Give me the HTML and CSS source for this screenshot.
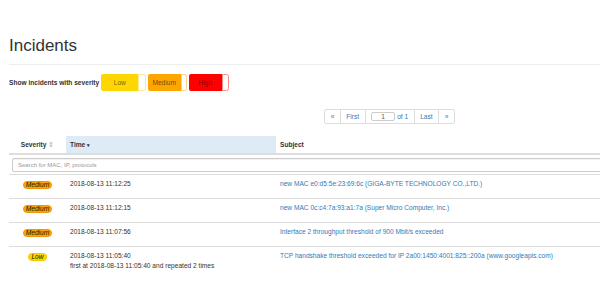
FILE: index.html
```html
<!DOCTYPE html>
<html>
<head>
<meta charset="utf-8">
<title>Incidents</title>
<link rel="stylesheet" href="styles.css">
</head>
<body>
<div class="page">
  <h1 class="title">Incidents</h1>

  <div class="filter">
    <span class="filter-label">Show incidents with severity</span>
    <span class="sev-btn sev-low"><span class="sev-name">Low</span><span class="sev-check"></span></span>
    <span class="sev-btn sev-medium"><span class="sev-name">Medium</span><span class="sev-check"></span></span>
    <span class="sev-btn sev-high"><span class="sev-name">High</span><span class="sev-check"></span></span>
  </div>

  <div class="pager">
    <ul class="pagination">
      <li class="pg-item">&laquo;</li>
      <li class="pg-item">First</li>
      <li class="pg-item pg-current"><span class="pg-box">1</span><span class="pg-of">of 1</span></li>
      <li class="pg-item">Last</li>
      <li class="pg-item">&raquo;</li>
    </ul>
  </div>

  <table class="incidents">
    <colgroup>
      <col class="col-sev">
      <col class="col-time">
      <col class="col-subject">
    </colgroup>
    <thead>
      <tr>
        <th class="th-sev">Severity <span class="sort-both">&#8661;</span></th>
        <th class="th-time sorted">Time <span class="sort-desc">&#9662;</span></th>
        <th class="th-subject">Subject</th>
      </tr>
    </thead>
    <tbody>
      <tr class="search-row">
        <td colspan="3"><div class="search-input">Search for MAC, IP, protocols</div></td>
      </tr>
      <tr>
        <td class="cell-sev"><span class="badge badge-medium">Medium</span></td>
        <td class="cell-time">2018-08-13 11:12:25</td>
        <td class="cell-subject"><a class="link">new MAC e0:d5:5e:23:69:6c (GIGA-BYTE TECHNOLOGY CO.,LTD.)</a></td>
      </tr>
      <tr>
        <td class="cell-sev"><span class="badge badge-medium">Medium</span></td>
        <td class="cell-time">2018-08-13 11:12:15</td>
        <td class="cell-subject"><a class="link">new MAC 0c:c4:7a:93:a1:7a (Super Micro Computer, Inc.)</a></td>
      </tr>
      <tr>
        <td class="cell-sev"><span class="badge badge-medium">Medium</span></td>
        <td class="cell-time">2018-08-13 11:07:56</td>
        <td class="cell-subject"><a class="link">Interface 2 throughput threshold of 900 Mbit/s exceeded</a></td>
      </tr>
      <tr>
        <td class="cell-sev"><span class="badge badge-low">Low</span></td>
        <td class="cell-time">2018-08-13 11:05:40<br>first at 2018-08-13 11:05:40 and repeated 2 times</td>
        <td class="cell-subject"><a class="link">TCP handshake threshold exceeded for IP 2a00:1450:4001:825::200a (www.googleapis.com)</a></td>
      </tr>
    </tbody>
  </table>
</div>
</body>
</html>
```

FILE: styles.css
```css
html, body {
  margin: 0;
  padding: 0;
  overflow: hidden;
  background: #fff;
}

body {
  font-family: "Liberation Sans", Arial, sans-serif;
  font-size: 6.6px;
  line-height: 9.4px;
  color: #333;
}

.page {
  width: 761px;
  padding: 37px 0 0 9px;
}

.title {
  margin: 0;
  font-size: 17px;
  line-height: 18.7px;
  font-weight: 400;
  color: #333;
  padding-bottom: 8px;
  border-bottom: 1px solid #eee;
}

/* severity filter */
.filter {
  display: flex;
  align-items: center;
  gap: 2px;
  margin-top: 9.6px;
  height: 17px;
}

.filter-label {
  font-weight: 700;
  margin-right: 0;
}

.sev-btn {
  display: flex;
  height: 17px;
}

.sev-name {
  display: flex;
  align-items: center;
  justify-content: center;
  border-radius: 2px 0 0 2px;
  color: rgba(0, 0, 0, 0.6);
}

.sev-check {
  width: 5.4px;
  background: #fff;
  border: 1px solid;
  border-radius: 0 2.5px 2.5px 0;
}

.sev-low .sev-name { background: #ffd700; width: 37.3px; }
.sev-low .sev-check { border-color: #ffe98a; }
.sev-medium .sev-name { background: #ffa500; width: 32.7px; }
.sev-medium .sev-check { border-color: #ffd08a; width: 4.7px; }
.sev-high .sev-name { background: #ff0000; width: 32.3px; color: rgba(0, 0, 0, 0.55); }
.sev-high .sev-check { border-color: #ff8a8a; }

/* pagination */
.pager {
  display: flex;
  justify-content: center;
  margin-top: 17.3px;
}

.pagination {
  display: flex;
  list-style: none;
  margin: 0;
  padding: 0;
}

.pg-item {
  display: flex;
  align-items: center;
  height: 13.7px;
  padding: 0 5.5px;
  border: 1px solid #ddd;
  margin-left: -1px;
  color: #337ab7;
  background: #fff;
}

.pg-item:first-child {
  margin-left: 0;
  border-radius: 2px 0 0 2px;
}

.pg-item:last-child {
  border-radius: 0 2px 2px 0;
}

.pg-current {
  gap: 2px;
}

.pg-box {
  display: flex;
  align-items: center;
  justify-content: center;
  width: 22px;
  height: 7px;
  border: 1px solid #ccc;
  border-radius: 2px;
  color: #555;
}

/* table */
.incidents {
  width: 761px;
  margin-top: 12px;
  border-collapse: collapse;
  table-layout: fixed;
}

.col-sev { width: 57px; }
.col-time { width: 210px; }

.incidents th {
  font-weight: 700;
  text-align: left;
  padding: 3.3px 4px;
  border-bottom: 2px solid #ddd;
}

.incidents th.th-sev {
  text-align: center;
}

.incidents th.sorted {
  background: #deebf6;
}

.sort-both {
  color: #aaa;
  font-weight: 400;
}

.sort-desc {
  font-size: 5px;
}

.search-row td {
  padding: 2.6px 3px;
}

.search-input {
  height: 12px;
  border: 1px solid #ccc;
  border-radius: 2px;
  box-shadow: inset 0 1px 1px rgba(0, 0, 0, 0.06);
  padding: 0 5px;
  font-size: 6px;
  line-height: 12px;
  color: #999;
  white-space: nowrap;
}

.incidents tbody tr + tr td {
  border-top: 1px solid #ddd;
  padding: 4px 4px 9.6px;
  vertical-align: top;
}

.cell-sev {
  text-align: center;
}

.badge {
  display: inline-block;
  vertical-align: top;
  margin-top: 1.2px;
  height: 6px;
  line-height: 6px;
  padding: 0 2px;
  border: 1px solid;
  border-radius: 4px;
  font-style: italic;
  color: #111;
}

.badge-medium {
  background: #ffa500;
  border-color: #f0960a;
}

.badge-low {
  background: #ffd700;
  border-color: #f0c800;
}

.link {
  color: #337ab7;
  text-decoration: none;
}
```
